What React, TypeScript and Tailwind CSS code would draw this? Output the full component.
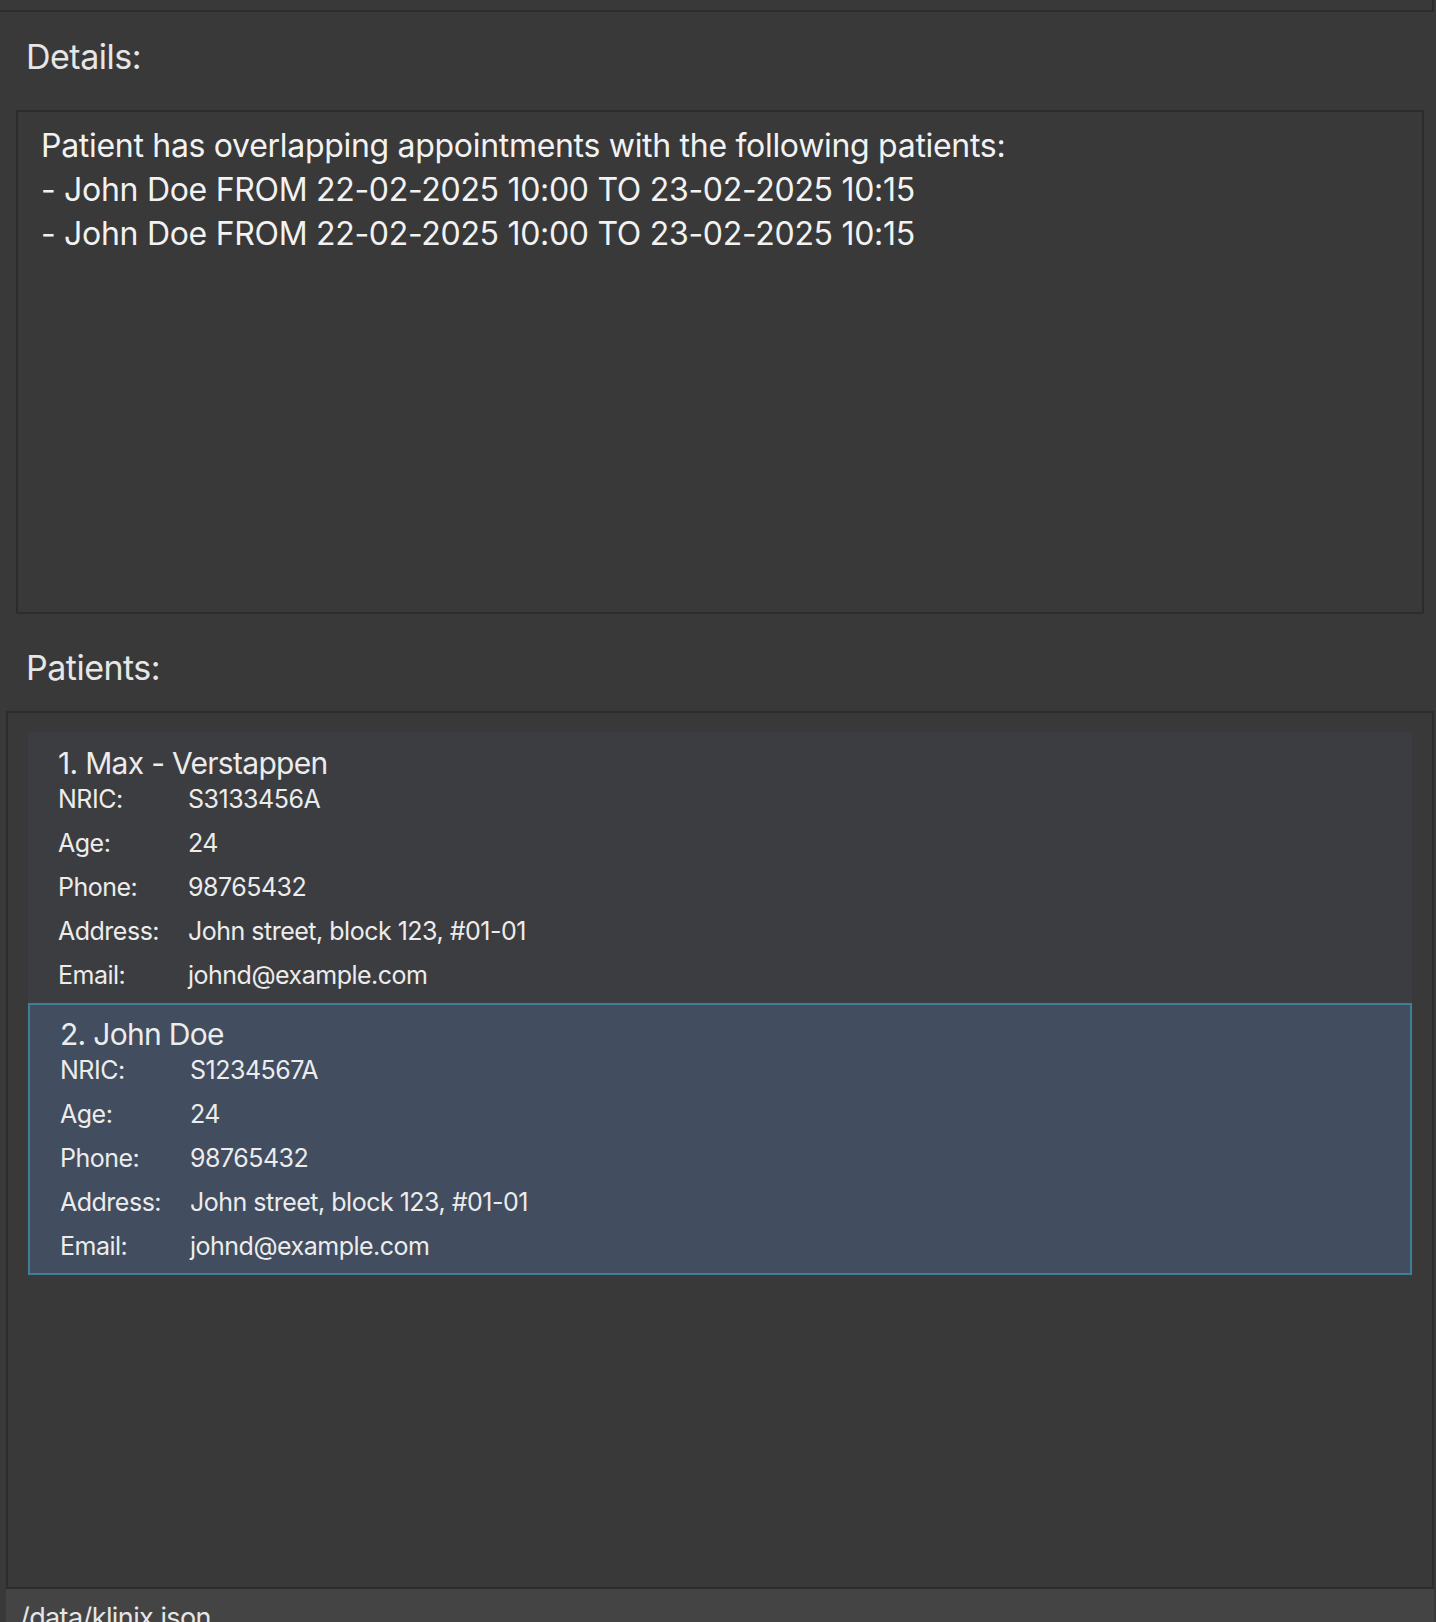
import React from "react";

interface Patient {
  id: number;
  name: string;
  nric: string;
  age: string;
  phone: string;
  address: string;
  email: string;
}

const patients: Patient[] = [
  { id: 1, name: "Max - Verstappen", nric: "S3133456A", age: "24", phone: "98765432", address: "John street, block 123, #01-01", email: "johnd@example.com" },
  { id: 2, name: "John Doe", nric: "S1234567A", age: "24", phone: "98765432", address: "John street, block 123, #01-01", email: "johnd@example.com" },
];

const details = [
  "Patient has overlapping appointments with the following patients:",
  "- John Doe FROM 22-02-2025 10:00 TO 23-02-2025 10:15",
  "- John Doe FROM 22-02-2025 10:00 TO 23-02-2025 10:15",
];

function Field({ label, value }: { label: string; value: string }) {
  return (
    <div className="flex h-[44px] items-center text-[25px] leading-[44px] tracking-[-0.5px] text-[#ececec]">
      <span className="w-[130px] shrink-0">{label}</span>
      <span>{value}</span>
    </div>
  );
}

function PatientCard({ patient, selected }: { patient: Patient; selected: boolean }) {
  return (
    <div
      className={
        selected
          ? "w-[1384px] h-[272px] border-2 border-[#3d8096] bg-[#424d5f] pt-[15px] pl-[30px] pb-[6px]"
          : "w-[1384px] h-[271px] bg-[#3c3d40] pt-[17px] pl-[30px] pb-[6px]"
      }
    >
      <div className="h-[28px] text-[30px] leading-[28px] tracking-[-0.7px] text-[#ececec]">
        {patient.id}. {patient.name}
      </div>
      <Field label="NRIC:" value={patient.nric} />
      <Field label="Age:" value={patient.age} />
      <Field label="Phone:" value={patient.phone} />
      <Field label="Address:" value={patient.address} />
      <Field label="Email:" value={patient.email} />
    </div>
  );
}

export default function App() {
  return (
    <div
      className="w-[1436px] h-[1622px] overflow-hidden flex flex-col bg-[#393939]"
      style={{ fontFamily: "Inter, 'Noto Sans', sans-serif" }}
    >
      {/* Top strip */}
      <div className="h-[12px] w-[1434px] shrink-0 border-b-2 border-r-2 border-[#2c2c2c]" />

      {/* Details */}
      <div className="mt-[28px] ml-[26px] text-[34px] leading-none tracking-[-0.5px] text-[#e6e6e6]">Details:</div>
      <div className="mt-[36px] ml-[16px] w-[1408px] h-[504px] shrink-0 border-2 border-[#2c2c2c] pt-[12px] pl-[23px]">
        {details.map((line, i) => (
          <div key={i} className="text-[32px] leading-[44px] tracking-[-0.3px] text-[#f2f2f2]">
            {line}
          </div>
        ))}
      </div>

      {/* Patients */}
      <div className="mt-[37px] ml-[26px] text-[34px] leading-none tracking-[-0.5px] text-[#e6e6e6]">Patients:</div>
      <div className="mt-[26px] ml-[6px] w-[1428px] h-[878px] shrink-0 border-2 border-[#2c2c2c] pt-[19px] pl-[20px]">
        {patients.map((p) => (
          <PatientCard key={p.id} patient={p} selected={p.id === 2} />
        ))}
      </div>

      {/* Status bar */}
      <div className="ml-[6px] w-[1428px] flex-1 bg-[#444444] pl-[14px] pt-[15px] text-[27px] leading-none tracking-[-0.6px] text-[#e6e6e6]">
        /data/klinix.json
      </div>
    </div>
  );
}
